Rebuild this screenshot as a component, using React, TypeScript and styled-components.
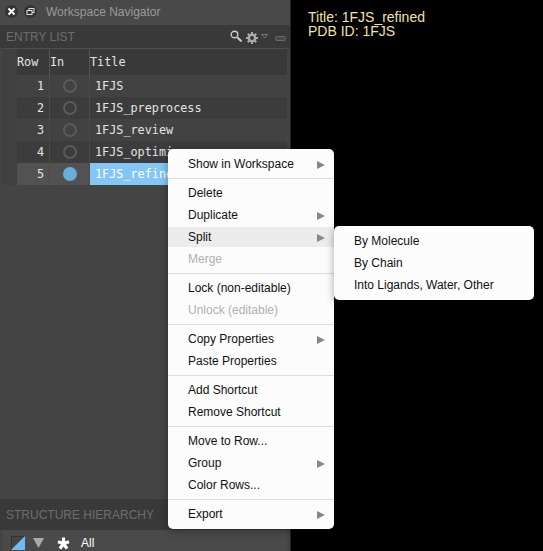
import React from "react";
import styled, { createGlobalStyle } from "styled-components";

const GlobalStyle = createGlobalStyle`
  html, body {
    margin: 0;
    padding: 0;
    background: #000;
  }
`;

const Page = styled.div`
  display: flex;
  height: 551px;
  overflow: hidden;
  position: relative;
  width: 543px;
  background: #000;
  font-family: "Liberation Sans", Arial, sans-serif;
`;

const Panel = styled.div`
  background: #444;
  border-right: 1px solid #222;
  display: flex;
  flex-direction: column;
  flex: none;
  width: 290px;
`;

const TitleBar = styled.div`
  align-items: center;
  background: #494949;
  box-sizing: border-box;
  display: flex;
  flex: none;
  gap: 6px;
  height: 25px;
  padding: 0 0 2px 5px;
`;

const WindowButton = styled.div`
  align-items: center;
  background: #333;
  border-radius: 50%;
  display: flex;
  height: 13px;
  justify-content: center;
  width: 13px;
`;

const TitleText = styled.div`
  color: #999;
  font-size: 12px;
  margin-left: 3px;
`;

const SectionBar = styled.div<{ $tall?: boolean }>`
  align-items: center;
  background: #393939;
  box-sizing: border-box;
  color: #6e6e6e;
  display: flex;
  flex: none;
  font-size: 12px;
  height: ${(props) => (props.$tall ? 31 : 23)}px;
  justify-content: space-between;
  padding: 0 4px 0 6px;
`;

const Tools = styled.div`
  align-items: center;
  display: flex;
  padding-top: 3px;
`;

const Search = styled.svg`
  margin: -4px 4px 0 0;
`;

const Chevron = styled.svg`
  margin: -4px 7px 0 3px;
`;

const Table = styled.div`
  border-top: 1px solid #4e4e4e;
  display: flex;
  flex-direction: column;
  flex: 1;
  font-family: "DejaVu Sans Mono", "Liberation Mono", monospace;
  font-size: 11.8px;
  margin: 0 3px;
`;

const Grid = styled.div<{ $bg: string }>`
  background: ${(props) => props.$bg};
  color: #e4e4e4;
  display: grid;
  grid-template-columns: 14px 32px 40px 1fr;
  height: 22px;
`;

const HeadRow = styled(Grid)`
  height: 26px;
`;

const HeadCell = styled.div<{ $plain?: boolean }>`
  align-items: center;
  border-left: 1px solid ${(props) => (props.$plain ? "transparent" : "#555")};
  display: flex;
  margin-left: ${(props) => (props.$plain ? -1 : 0)}px;
`;

const NumCell = styled.div`
  align-items: center;
  display: flex;
  justify-content: flex-end;
  padding-right: 5px;
`;

const InCell = styled.div`
  align-items: center;
  border-left: 1px solid #4a4a4a;
  display: flex;
  justify-content: center;
`;

const Dot = styled.div<{ $on?: boolean }>`
  background: ${(props) => (props.$on ? "#68aedb" : "transparent")};
  border: 2px solid ${(props) => (props.$on ? "#68aedb" : "#5a5a5a")};
  border-radius: 50%;
  box-sizing: border-box;
  height: 14px;
  width: 14px;
`;

const TitleCell = styled.div<{ $selected?: boolean }>`
  align-items: center;
  background: ${(props) => (props.$selected ? "#84c6f5" : "transparent")};
  border-left: 1px solid #4a4a4a;
  color: ${(props) => (props.$selected ? "#fff" : "#e4e4e4")};
  display: flex;
  padding-left: 5px;
`;

const Gutter = styled.div`
  background: #404040;
`;

const BottomRow = styled.div`
  align-items: center;
  background: #4a4a4a;
  box-sizing: border-box;
  color: #fff;
  display: flex;
  flex: none;
  font-size: 12px;
  height: 21px;
  margin: 0 3px;
  padding: 5px 0 0 8px;
`;

const SplitIcon = styled.svg`
  margin-right: 8px;
`;

const DownIcon = styled.svg`
  margin-right: 13px;
`;

const StarIcon = styled.svg`
  margin-right: 11px;
`;

const Output = styled.div`
  color: #f0e2a8;
  font-size: 14px;
  line-height: 14px;
  padding: 10px 0 0 17px;
`;

const Menu = styled.div<{ $top: number; $left: number; $width: number }>`
  background: #fcfcfc;
  border-radius: 5px;
  box-shadow: 0 2px 8px rgba(0, 0, 0, 0.35);
  box-sizing: border-box;
  left: ${(props) => props.$left}px;
  padding: 4px 0;
  position: absolute;
  top: ${(props) => props.$top}px;
  width: ${(props) => props.$width}px;
`;

const Item = styled.div<{ $disabled?: boolean; $active?: boolean }>`
  align-items: center;
  background: ${(props) => (props.$active ? "#ececec" : "transparent")};
  background-clip: padding-box;
  border-bottom: 1px solid transparent;
  border-top: 1px solid transparent;
  box-sizing: border-box;
  color: ${(props) => (props.$disabled ? "#b0b0b0" : "#111")};
  display: flex;
  font-size: 12px;
  height: 22px;
  justify-content: space-between;
  padding: 0 9px 1px 20px;
`;

const Arrow = styled.div`
  border-bottom: 4px solid transparent;
  border-left: 8px solid #888;
  border-top: 4px solid transparent;
  height: 0;
  margin-top: 3px;
  width: 0;
`;

const Divider = styled.div`
  background: #ddd;
  height: 1px;
  margin: 3px 0;
`;

type Entry = { label: string; disabled?: boolean; arrow?: boolean; active?: boolean } | "-";

const MENU: Entry[] = [
  { label: "Show in Workspace", arrow: true },
  "-",
  { label: "Delete" },
  { label: "Duplicate", arrow: true },
  { label: "Split", arrow: true, active: true },
  { label: "Merge", disabled: true },
  "-",
  { label: "Lock (non-editable)" },
  { label: "Unlock (editable)", disabled: true },
  "-",
  { label: "Copy Properties", arrow: true },
  { label: "Paste Properties" },
  "-",
  { label: "Add Shortcut" },
  { label: "Remove Shortcut" },
  "-",
  { label: "Move to Row..." },
  { label: "Group", arrow: true },
  { label: "Color Rows..." },
  "-",
  { label: "Export", arrow: true },
];

const ROWS = ["1FJS", "1FJS_preprocess", "1FJS_review", "1FJS_optimize", "1FJS_refined"];

const GEAR_TEETH = [0, 45, 90, 135];

const App = () => (
  <Page>
    <GlobalStyle />
    <Panel>
      <TitleBar>
        <WindowButton>
          <svg width="9" height="9" viewBox="0 0 9 9">
            <path d="M1.500 1.500l6 6M7.500 1.500l-6 6" stroke="#fff" strokeWidth="2" />
          </svg>
        </WindowButton>
        <WindowButton>
          <svg width="9" height="9" viewBox="0 0 9 9" fill="none" stroke="#ddd">
            <rect x="3" y="1.500" width="5" height="4" />
            <rect x="1" y="3.500" width="5" height="4" fill="#333" />
          </svg>
        </WindowButton>
        <TitleText>Workspace Navigator</TitleText>
      </TitleBar>
      <SectionBar>
        ENTRY LIST
        <Tools>
          <Search width="12" height="12" viewBox="0 0 12 12" fill="none" stroke="#ccc">
            <circle cx="4.500" cy="4.500" r="3.300" strokeWidth="1.400" />
            <path d="M7.500 7.500l4 4" strokeWidth="2" />
          </Search>
          <svg width="12" height="12" viewBox="0 0 12 12">
            <circle cx="6" cy="6" r="3.200" fill="none" stroke="#aaa" strokeWidth="2.400" />
            {GEAR_TEETH.map((deg) => (
              <rect key={deg} x="5" y="0" width="2" height="12" fill="#aaa" transform={`rotate(${deg} 6 6)`} />
            ))}
            <circle cx="6" cy="6" r="2" fill="#393939" />
          </svg>
          <Chevron width="7" height="5" viewBox="0 0 7 5" fill="none" stroke="#777">
            <path d="M.5.5L3.500 4 6.500.5z" />
          </Chevron>
          <svg width="11" height="5" viewBox="0 0 11 5" fill="#4a4a4a" stroke="#6a6a6a">
            <rect x=".5" y=".5" width="10" height="4" rx="1" />
          </svg>
        </Tools>
      </SectionBar>
      <Table>
        <HeadRow $bg="#393939">
          <Gutter />
          <HeadCell $plain>Row</HeadCell>
          <HeadCell>In</HeadCell>
          <HeadCell>Title</HeadCell>
        </HeadRow>
        {ROWS.map((title, i) => {
          const selected = i === 4;
          return (
            <Grid key={title} $bg={selected ? "#525252" : i % 2 ? "#3c3c3c" : "#424242"}>
              <Gutter />
              <NumCell>{i + 1}</NumCell>
              <InCell>
                <Dot $on={selected} />
              </InCell>
              <TitleCell $selected={selected}>{title}</TitleCell>
            </Grid>
          );
        })}
      </Table>
      <SectionBar $tall>STRUCTURE HIERARCHY</SectionBar>
      <BottomRow>
        <SplitIcon width="14" height="14" viewBox="0 0 14 14">
          <rect x=".5" y=".5" width="13" height="13" fill="#444" stroke="#333" />
          <path d="M14 0v14H0z" fill="#6cbcf5" />
        </SplitIcon>
        <DownIcon width="11" height="10" viewBox="0 0 11 10">
          <path d="M0 0h11L5.500 10z" fill="#aaa" />
        </DownIcon>
        <StarIcon width="13" height="13" viewBox="0 0 13 13">
          <path
            d="M6.500 6.500V.5M6.500 6.500L12 4.700M6.500 6.500l3.500 5.200M6.500 6.500L3 11.700M6.500 6.500L1 4.700"
            stroke="#fff"
            strokeWidth="3.200"
            fill="none"
          />
        </StarIcon>
        All
      </BottomRow>
    </Panel>
    <Output>
      Title: 1FJS_refined
      <br />
      PDB ID: 1FJS
    </Output>
    <Menu $top={149} $left={168} $width={166}>
      {MENU.map((entry, i) =>
        entry === "-" ? (
          <Divider key={i} />
        ) : (
          <Item key={entry.label} $disabled={entry.disabled} $active={entry.active}>
            {entry.label}
            {entry.arrow && <Arrow />}
          </Item>
        )
      )}
    </Menu>
    <Menu $top={226} $left={334} $width={200}>
      <Item>By Molecule</Item>
      <Item>By Chain</Item>
      <Item>Into Ligands, Water, Other</Item>
    </Menu>
  </Page>
);

export default App;
